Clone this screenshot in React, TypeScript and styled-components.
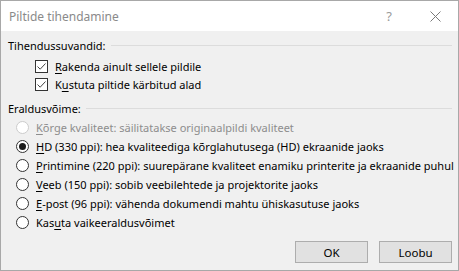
import styled, { createGlobalStyle } from "styled-components";

const GlobalStyle = createGlobalStyle`
  html, body {
    margin: 0;
    padding: 0;
    background: #ffffff;
  }
  * {
    box-sizing: border-box;
  }
`;

const Window = styled.div`
  width: 459px;
  height: 271px;
  border: 1px solid #a8a8a8;
  background: #f0f0f0;
  display: flex;
  flex-direction: column;
  font-family: "Noto Sans", "Open Sans", sans-serif;
  font-size: 11px;
  color: #000;
`;

const TitleBar = styled.div`
  height: 30px;
  background: #ffffff;
  display: flex;
  align-items: center;
  padding-left: 8px;
  flex-shrink: 0;
`;

const Title = styled.div`
  flex: 1;
  color: #8a8a8a;
  font-size: 12px;
`;

const TitleButton = styled.div`
  width: 46px;
  height: 30px;
  display: flex;
  align-items: center;
  justify-content: center;
  color: #9a9a9a;
`;

const Body = styled.div`
  flex: 1;
  display: flex;
  flex-direction: column;
  padding: 6px 6px 7px 7px;
`;

const GroupHeader = styled.div<{ $gap?: number; $top?: number }>`
  display: flex;
  align-items: center;
  height: 16px;
  gap: 5px;
  margin-top: ${(p) => p.$top ?? 0}px;
  margin-bottom: ${(p) => p.$gap ?? 0}px;

  &::after {
    content: "";
    flex: 1;
    height: 1px;
    background: #dcdcdc;
  }
`;

const CheckRow = styled.label`
  display: flex;
  align-items: center;
  height: 18px;
  padding-left: 27px;
  gap: 7px;
`;

const Box = styled.span`
  width: 13px;
  height: 13px;
  border: 1px solid #333;
  background: #fff;
  display: flex;
  align-items: center;
  justify-content: center;
  flex-shrink: 0;
`;

const RadioRow = styled.label<{ $disabled?: boolean }>`
  display: flex;
  align-items: center;
  height: 19px;
  padding-left: 8px;
  gap: 7px;
  white-space: nowrap;
  color: ${(p) => (p.$disabled ? "#8d8d8d" : "#000")};
`;

const Circle = styled.span<{ $disabled?: boolean }>`
  width: 13px;
  height: 13px;
  border-radius: 50%;
  border: 1px solid ${(p) => (p.$disabled ? "#cccccc" : "#333")};
  background: #fff;
  display: flex;
  align-items: center;
  justify-content: center;
  flex-shrink: 0;
`;

const Dot = styled.span`
  width: 7px;
  height: 7px;
  border-radius: 50%;
  background: #1a1a1a;
`;

const Key = styled.span`
  text-decoration: underline;
  text-underline-offset: 2px;
`;

const Footer = styled.div`
  margin-top: auto;
  display: flex;
  justify-content: flex-end;
  gap: 11px;
`;

const Button = styled.button`
  width: 73px;
  height: 22px;
  background: #e1e1e1;
  border: 1px solid #adadad;
  font-family: inherit;
  font-size: 11.5px;
  color: #000;
  padding: 0;
`;

const checks = [
  { key: "R", rest: "akenda ainult sellele pildile" },
  { pre: "K", key: "u", rest: "stuta piltide kärbitud alad" },
];

const radios = [
  { key: "K", rest: "õrge kvaliteet: säilitatakse originaalpildi kvaliteet", disabled: true },
  { key: "H", rest: "D (330 ppi): hea kvaliteediga kõrglahutusega (HD) ekraanide jaoks", checked: true },
  { key: "P", rest: "rintimine (220 ppi): suurepärane kvaliteet enamiku printerite ja ekraanide puhul" },
  { key: "V", rest: "eeb (150 ppi): sobib veebilehtede ja projektorite jaoks" },
  { key: "E", rest: "-post (96 ppi): vähenda dokumendi mahtu ühiskasutuse jaoks" },
  { pre: "Kas", key: "u", rest: "ta vaikeeraldusvõimet" },
];

export default function App() {
  return (
    <>
      <GlobalStyle />
      <Window>
        <TitleBar>
          <Title>Piltide tihendamine</Title>
          <TitleButton>
            <span style={{ fontSize: 13 }}>?</span>
          </TitleButton>
          <TitleButton>
            <svg width="11" height="11" viewBox="0 0 11 11">
              <path d="M0.5 0.5 L10.5 10.5 M10.5 0.5 L0.5 10.5" stroke="#7a7a7a" strokeWidth="1" />
            </svg>
          </TitleButton>
        </TitleBar>
        <Body>
          <GroupHeader $gap={4}>Tihendussuvandid:</GroupHeader>
          {checks.map((c) => (
            <CheckRow key={c.rest}>
              <Box>
                <svg width="11" height="11" viewBox="0 0 11 11">
                  <path d="M1.5 5.5 L4.2 8.2 L9.5 2.5" stroke="#444" strokeWidth="1" fill="none" />
                </svg>
              </Box>
              <span>
                {c.pre}
                <Key>{c.key}</Key>
                {c.rest}
              </span>
            </CheckRow>
          ))}
          <GroupHeader $top={7} $gap={2}>
            Eraldusvõime:
          </GroupHeader>
          {radios.map((r) => (
            <RadioRow key={r.rest} $disabled={r.disabled}>
              <Circle $disabled={r.disabled}>{r.checked && <Dot />}</Circle>
              <span>
                {r.pre}
                <Key>{r.key}</Key>
                {r.rest}
              </span>
            </RadioRow>
          ))}
          <Footer>
            <Button>OK</Button>
            <Button>Loobu</Button>
          </Footer>
        </Body>
      </Window>
    </>
  );
}
